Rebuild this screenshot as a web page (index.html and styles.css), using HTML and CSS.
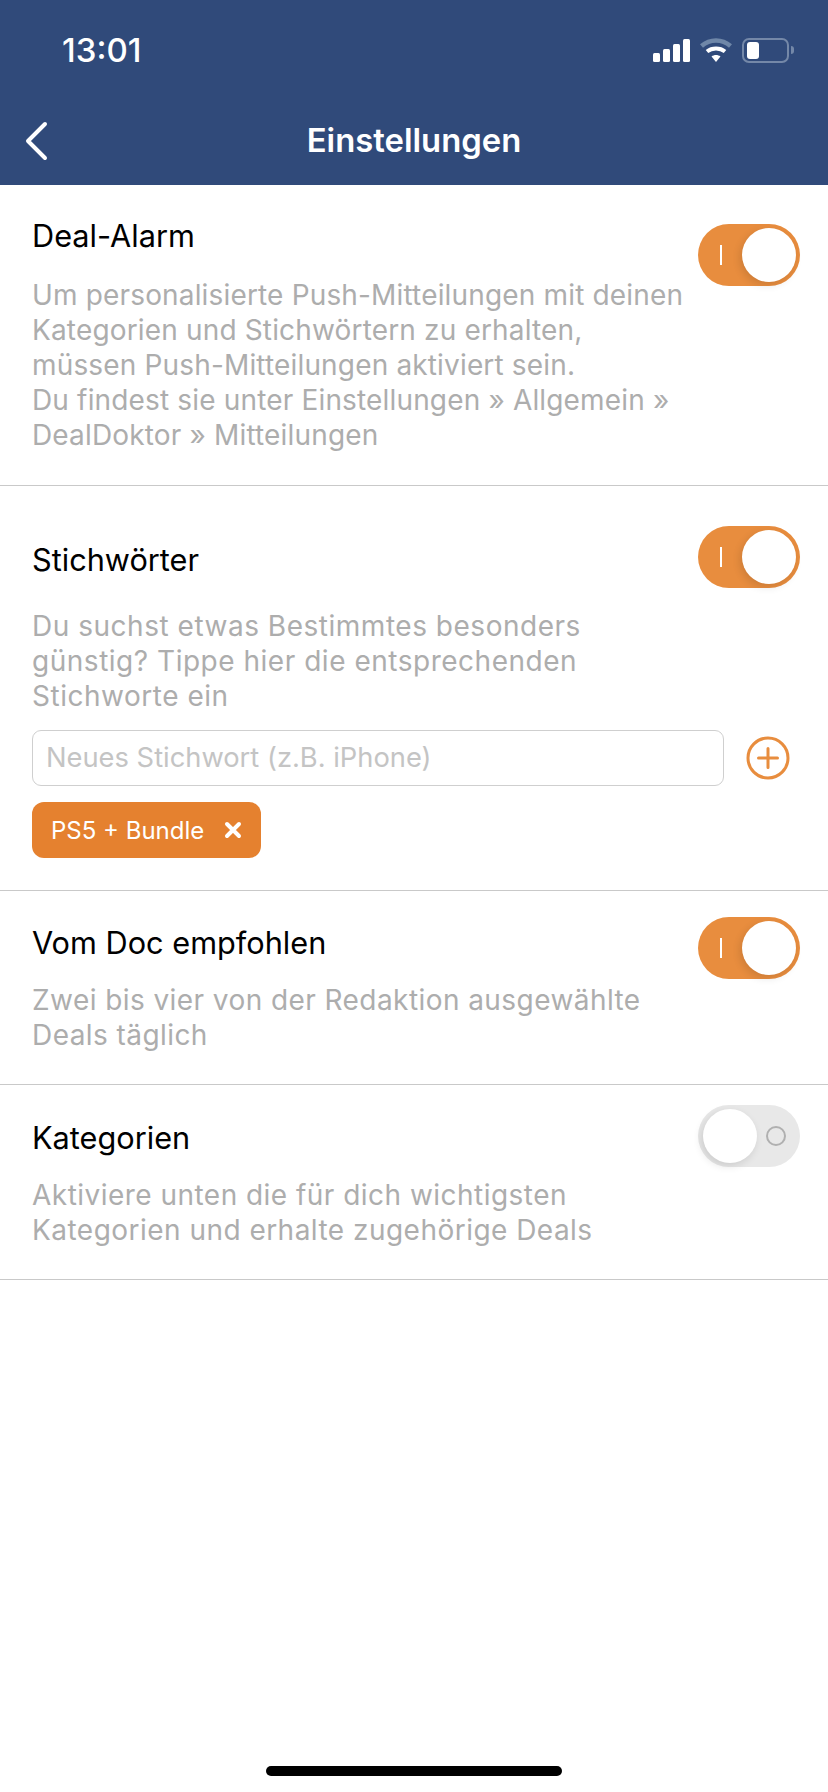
FILE: index.html
```html
<!DOCTYPE html>
<html lang="de">
<head>
<meta charset="utf-8">
<title>Einstellungen</title>
<link rel="stylesheet" href="styles.css">
</head>
<body>
<div class="app">
  <header class="header">
    <div class="status">
      <span class="time">13:01</span>
      <div class="status-icons">
        <svg class="signal" width="37" height="23" viewBox="0 0 37 23"><rect x="0" y="14" width="7" height="9" rx="1.5"/><rect x="10" y="10" width="7" height="13" rx="1.5"/><rect x="20" y="5" width="7" height="18" rx="1.5"/><rect x="30" y="0" width="7" height="23" rx="1.5"/></svg>
        <svg class="wifi" width="32" height="24" viewBox="0 0 32 24"><path d="M1.500 8C10 0.500 22 0.500 30.500 8" stroke="#6f87a8" stroke-width="4.500" fill="none"/><path d="M7 13.500C12 9.500 20 9.500 25 13.500" stroke="#fff" stroke-width="4" fill="none"/><path d="M11.500 18.500L16 24L20.500 18.500C18 16.500 14 16.500 11.500 18.500Z" fill="#fff"/></svg>
        <div class="battery"><div class="battery-level"></div></div>
        <div class="battery-tip"></div>
      </div>
    </div>
    <div class="nav">
      <svg class="back" width="26" height="40" viewBox="0 0 26 40"><path d="M22 3L5 20L22 37" stroke="#fff" stroke-width="4" stroke-linecap="round" stroke-linejoin="round" fill="none"/></svg>
      <h1 class="title">Einstellungen</h1>
    </div>
  </header>

  <section class="row row-alarm">
    <div class="row-head">
      <h2 class="row-title">Deal-Alarm</h2>
      <div class="toggle on"><span class="mark-on"></span><span class="knob"></span></div>
    </div>
    <p class="desc">Um personalisierte Push-Mitteilungen mit deinen<br>Kategorien und Stichwörtern zu erhalten,<br>müssen Push-Mitteilungen aktiviert sein.<br>Du findest sie unter Einstellungen » Allgemein »<br>DealDoktor » Mitteilungen</p>
  </section>

  <section class="row row-keywords">
    <div class="row-head">
      <h2 class="row-title">Stichwörter</h2>
      <div class="toggle on"><span class="mark-on"></span><span class="knob"></span></div>
    </div>
    <p class="desc">Du suchst etwas Bestimmtes besonders<br>günstig? Tippe hier die entsprechenden<br>Stichworte ein</p>
    <div class="add-row">
      <div class="input">Neues Stichwort (z.B. iPhone)</div>
      <svg class="plus" width="44" height="44" viewBox="0 0 44 44"><circle cx="22" cy="22" r="20" stroke="#e88d3e" stroke-width="3" fill="none"/><path d="M12.500 22H31.500M22 12.500V31.500" stroke="#e88d3e" stroke-width="3" stroke-linecap="round"/></svg>
    </div>
    <div class="tag"><span>PS5 + Bundle</span><svg width="18" height="18" viewBox="0 0 18 18"><path d="M3 3L15 15M15 3L3 15" stroke="#fff" stroke-width="4" stroke-linecap="round"/></svg></div>
  </section>

  <section class="row row-doc">
    <div class="row-head">
      <h2 class="row-title">Vom Doc empfohlen</h2>
      <div class="toggle on"><span class="mark-on"></span><span class="knob"></span></div>
    </div>
    <p class="desc">Zwei bis vier von der Redaktion ausgewählte<br>Deals täglich</p>
  </section>

  <section class="row row-cat">
    <div class="row-head">
      <h2 class="row-title">Kategorien</h2>
      <div class="toggle off"><span class="knob"></span><span class="mark-off"></span></div>
    </div>
    <p class="desc">Aktiviere unten die für dich wichtigsten<br>Kategorien und erhalte zugehörige Deals</p>
  </section>

  <div class="spacer"><div class="home-bar"></div></div>
</div>
</body>
</html>
```

FILE: styles.css
```css
* { box-sizing: border-box; }
html, body { margin: 0; padding: 0; background: #fff; }
body { font-family: Inter, "Liberation Sans", sans-serif; }
.app { width: 828px; height: 1792px; display: flex; flex-direction: column; overflow: hidden; }

.header { height: 185px; background: #304a7a; color: #fff; flex: none; }
.status { height: 100px; padding: 30px 34px 0 62px; display: flex; justify-content: space-between; align-items: flex-start; }
.time { font-size: 33px; font-weight: 500; line-height: 41px; }
.status-icons { display: flex; align-items: center; height: 26px; margin-top: 7px; }
.signal { fill: #fff; margin-right: 10px; }
.wifi { margin-right: 10px; }
.battery { width: 47px; height: 25px; border: 2px solid #7488a8; border-radius: 7px; padding: 2px 3px; }
.battery-level { width: 12px; height: 17px; background: #fff; border-radius: 3px; }
.battery-tip { width: 3px; height: 8px; background: #7488a8; border-radius: 0 3px 3px 0; margin-left: 2px; }

.nav { height: 85px; position: relative; display: flex; align-items: center; justify-content: center; padding-bottom: 6px; }
.back { position: absolute; left: 23px; top: 21px; }
.title { margin: 0; font-size: 32.800px; font-weight: 600; line-height: 40px; }

.row { border-bottom: 1px solid #c9c9c9; padding: 0 28px 0 32px; flex: none; }
.row-alarm { height: 301px; padding-top: 41px; }
.row-keywords { height: 405px; padding-top: 64px; }
.row-doc { height: 194px; padding-top: 42px; }
.row-cat { height: 195px; padding-top: 43px; }

.row-head { display: flex; justify-content: space-between; align-items: flex-start; height: 40px; }
.row-title { margin: -10px 0 0; font-size: 30.700px; font-weight: 400; line-height: 40px; color: #000; }
.desc { margin: 12px 0 0; font-size: 28px; line-height: 35px; letter-spacing: .16px; color: #adadad; white-space: nowrap; }
.row-keywords .desc { margin-top: 19px; letter-spacing: .52px; }
.row-doc .desc { margin-top: 10px; letter-spacing: .43px; }
.row-cat .desc { margin-top: 10px; letter-spacing: .47px; }

.toggle { width: 102px; height: 62px; border-radius: 31px; display: flex; align-items: center; flex: none; margin-top: -2px; }
.row-keywords .toggle { margin-top: -24px; }
.row-doc .toggle { margin-top: -16px; }
.row-cat .toggle { margin-top: -23px; }
.toggle.on { background: #e88d3e; justify-content: space-between; padding: 0 4px 0 22px; }
.toggle.off { background: #e8e8e8; padding: 0 14px 0 5px; justify-content: space-between; }
.knob { width: 54px; height: 54px; border-radius: 50%; background: #fff; box-shadow: -2px 3px 8px rgba(0,0,0,.12); }
.mark-on { width: 2px; height: 20px; background: #fff; }
.mark-off { width: 20px; height: 20px; border: 2px solid #b0b0b0; border-radius: 50%; }

.add-row { display: flex; align-items: center; justify-content: space-between; margin-top: 16px; padding-right: 10px; }
.input { width: 692px; height: 56px; border: 1px solid #cfcfcf; border-radius: 9px; padding-left: 13px; font-size: 27.300px; line-height: 54px; color: #c4c4c4; }
.tag { display: inline-flex; align-items: center; gap: 20px; height: 56px; margin-top: 16px; padding: 0 19px 0 19px; background: #e5812f; border-radius: 12px; color: #fff; font-size: 24px; }

.spacer { flex: 1; display: flex; align-items: flex-end; justify-content: center; padding-bottom: 16px; }
.home-bar { width: 296px; height: 10px; border-radius: 5px; background: #000; }
```
